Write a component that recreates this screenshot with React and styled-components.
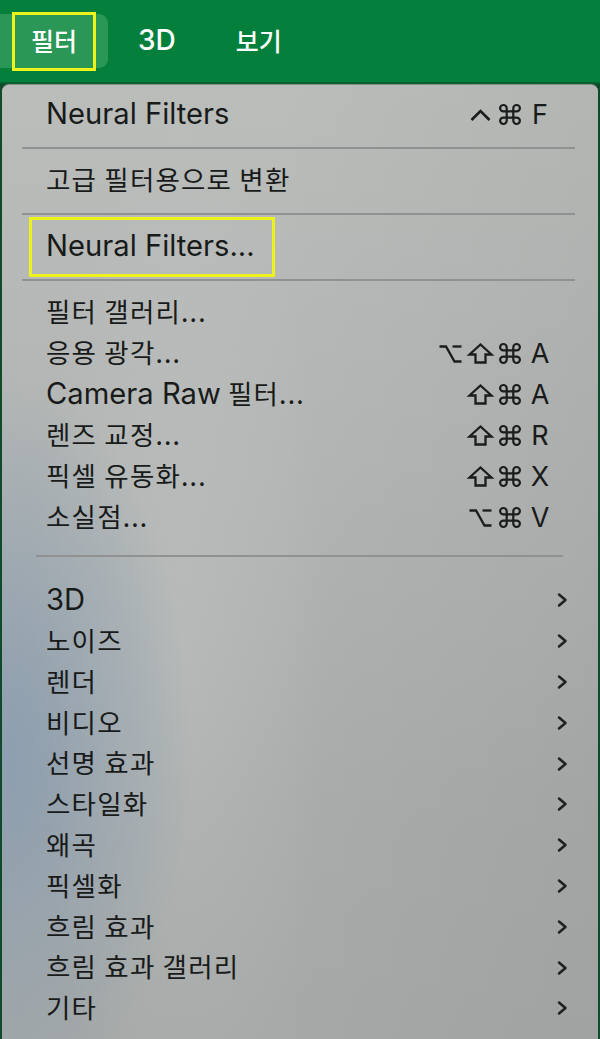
import React from "react";
import styled, { createGlobalStyle } from "styled-components";

const Global = createGlobalStyle`
  html, body { margin: 0; padding: 0; }
  body {
    background: #0f4a2a;
    font-family: Inter, "Noto Sans CJK KR", sans-serif;
    -webkit-font-smoothing: antialiased;
  }
`;

const Page = styled.div`
  width: 600px;
  height: 1039px;
  overflow: hidden;
  background: #0f4a2a;
  display: flex;
  flex-direction: column;
`;

const MenuBar = styled.div`
  height: 82px;
  flex: none;
  background: #04803c;
  border-bottom: 2px solid #08602f;
  display: flex;
  align-items: center;
  overflow: hidden;
`;

const ActiveTab = styled.div`
  height: 54px;
  margin-left: -14px;
  padding: 0 12px 0 26px;
  border-radius: 9px;
  background: #2a9757;
  display: flex;
  align-items: center;
`;

const Mark = styled.span`
  box-sizing: border-box;
  display: flex;
  align-items: center;
  justify-content: ${(p) => (p.$center ? "center" : "flex-start")};
  height: ${(p) => p.$h}px;
  width: ${(p) => (p.$w ? `${p.$w}px` : "auto")};
  margin-left: ${(p) => p.$ml || 0}px;
  padding: ${(p) => p.$pad || "0"};
  border: 3px solid #eef21c;
`;

const TabLabel = styled.span`
  color: #ffffff;
  font-family: "Noto Sans CJK KR", sans-serif;
  font-size: 25px;
  font-weight: 500;
  line-height: 1;
  padding-bottom: 2px;
`;

const Tab = styled.div`
  padding: 0 30px;
  display: flex;
  align-items: center;
  height: 54px;
`;

const LatinTabLabel = styled(TabLabel)`
  font-family: Inter, sans-serif;
  font-size: 28px;
`;

const Menu = styled.div`
  flex: 1;
  margin: 0 2px;
  border-top: 1px solid #8a8d8b;
  border-radius: 7px 7px 0 0;
  padding-top: 9px;
  background:
    radial-gradient(ellipse 190px 380px at 0% 70%, rgba(128, 152, 178, 0.7), rgba(128, 152, 178, 0) 100%),
    radial-gradient(ellipse 150px 520px at 30% 58%, rgba(205, 210, 210, 0.28), rgba(205, 210, 210, 0) 100%),
    linear-gradient(90deg, rgba(0, 0, 0, 0) 45%, rgba(0, 0, 0, 0.04) 100%),
    linear-gradient(180deg, #babdba 0%, #b2b5b3 40%, #a9acaa 75%, #a6a9a7 100%);
`;

const Row = styled.div`
  height: ${(p) => (p.$sub ? 40.8 : 41)}px;
  display: flex;
  align-items: center;
  padding: 0 ${(p) => (p.$sub ? 30 : 43)}px 0 44px;
  color: #191a1a;
`;

const Label = styled.span`
  font-family: "Noto Sans CJK KR", sans-serif;
  font-size: 26.5px;
  letter-spacing: 1.2px;
  line-height: 1;
  white-space: nowrap;
  padding-bottom: 2px;
`;

const Latin = styled.span`
  font-family: Inter, sans-serif;
  font-size: 29.2px;
  letter-spacing: 0;
`;

const Shortcut = styled.span`
  margin-left: auto;
  display: grid;
  grid-auto-flow: column;
  grid-auto-columns: 30px;
  justify-items: center;
  align-items: center;
  height: 30px;
`;

const Letter = styled.span`
  font-family: Inter, sans-serif;
  font-size: 27px;
  line-height: 1;
  color: #191a1a;
`;

const ModIcon = styled.svg`
  display: block;
  fill: none;
  stroke: #1b1c1c;
  stroke-width: ${(p) => p.$sw || 2.2};
  stroke-linejoin: ${(p) => p.$join || "miter"};
  stroke-linecap: butt;
  overflow: visible;
`;

const Chevron = styled.svg`
  margin-left: auto;
  width: 12px;
  height: 16px;
  flex: none;
`;

const Separator = styled.div`
  height: ${(p) => p.$h}px;
  display: flex;
  align-items: ${(p) => (p.$top ? "flex-start" : "center")};
  padding-top: ${(p) => p.$top || 0}px;
  box-sizing: border-box;
  margin: 0 ${(p) => p.$r}px 0 ${(p) => p.$l}px;
  &::before {
    content: "";
    display: block;
    width: 100%;
    height: 2px;
    background: #8f9290;
  }
`;

const ChevronIcon = () => (
  <Chevron viewBox="0 0 12 16">
    <path d="M3 2.5 L9.5 8 L3 13.5" fill="none" stroke="#1f2020" strokeWidth="2.5" strokeLinecap="round" strokeLinejoin="round" />
  </Chevron>
);

const Ctrl = () => (
  <ModIcon width="21" height="12" viewBox="0 0 21 12" $sw={2.6} aria-label="⌃">
    <path d="M1.5 11 L10.5 2 L19.5 11" />
  </ModIcon>
);

const Opt = () => (
  <ModIcon width="23" height="18" viewBox="0 0 23 18" $sw={2.3} aria-label="⌥">
    <path d="M0.5 1.5 H7 L15.5 16.5 H22.5" />
    <path d="M13.5 1.5 H22.5" />
  </ModIcon>
);

const Shift = () => (
  <ModIcon width="25" height="21" viewBox="0 0 25 21" $sw={2.3} aria-label="⇧">
    <path d="M12.5 1.5 L23.5 11.5 H17.5 V19.5 H7.5 V11.5 H1.5 Z" />
  </ModIcon>
);

const Cmd = () => (
  <ModIcon width="22" height="21" viewBox="2 2 20 20" preserveAspectRatio="none" $sw={2} $join="round" aria-label="⌘">
    <path d="M15 6v12a3 3 0 1 0 3-3H6a3 3 0 1 0 3 3V6a3 3 0 1 0-3 3h12a3 3 0 1 0-3-3" />
  </ModIcon>
);

const modMap = { ctrl: Ctrl, opt: Opt, shift: Shift, cmd: Cmd };

const Keys = ({ mods, letter }) => (
  <Shortcut>
    {mods.map((m, i) => {
      const Icon = modMap[m];
      return <Icon key={i} />;
    })}
    <Letter>{letter}</Letter>
  </Shortcut>
);

const tools = [
  { label: "필터 갤러리..." },
  { label: "응용 광각...", mods: ["opt", "shift", "cmd"], letter: "A" },
  { latin: "Camera Raw", label: " 필터...", mods: ["shift", "cmd"], letter: "A" },
  { label: "렌즈 교정...", mods: ["shift", "cmd"], letter: "R" },
  { label: "픽셀 유동화...", mods: ["shift", "cmd"], letter: "X" },
  { label: "소실점...", mods: ["opt", "cmd"], letter: "V" },
];

const submenus = [
  "3D",
  "노이즈",
  "렌더",
  "비디오",
  "선명 효과",
  "스타일화",
  "왜곡",
  "픽셀화",
  "흐림 효과",
  "흐림 효과 갤러리",
  "기타",
];

export default function App() {
  return (
    <Page>
      <Global />
      <MenuBar>
        <ActiveTab>
          <Mark $h={59} $w={84} $center>
            <TabLabel>필터</TabLabel>
          </Mark>
        </ActiveTab>
        <Tab>
          <LatinTabLabel>3D</LatinTabLabel>
        </Tab>
        <Tab>
          <TabLabel>보기</TabLabel>
        </Tab>
      </MenuBar>
      <Menu>
        <Row>
          <Label>
            <Latin>Neural Filters</Latin>
          </Label>
          <Keys mods={["ctrl", "cmd"]} letter="F" />
        </Row>
        <Separator $h={25} $l={20} $r={23} />
        <Row>
          <Label>고급 필터용으로 변환</Label>
        </Row>
        <Separator $h={25} $l={20} $r={23} />
        <Row>
          <Mark $h={60} $ml={-17} $pad="0 17px 0 14px">
            <Label>
              <Latin>Neural Filters...</Latin>
            </Label>
          </Mark>
        </Row>
        <Separator $h={25} $l={20} $r={23} />
        {tools.map((t, i) => (
          <Row key={i}>
            <Label>
              {t.latin && <Latin>{t.latin}</Latin>}
              {t.label}
            </Label>
            {t.mods && <Keys mods={t.mods} letter={t.letter} />}
          </Row>
        ))}
        <Separator $h={42} $top={17} $l={34} $r={35} />
        {submenus.map((s) => (
          <Row key={s} $sub>
            <Label>{s === "3D" ? <Latin>3D</Latin> : s}</Label>
            <ChevronIcon />
          </Row>
        ))}
      </Menu>
    </Page>
  );
}
